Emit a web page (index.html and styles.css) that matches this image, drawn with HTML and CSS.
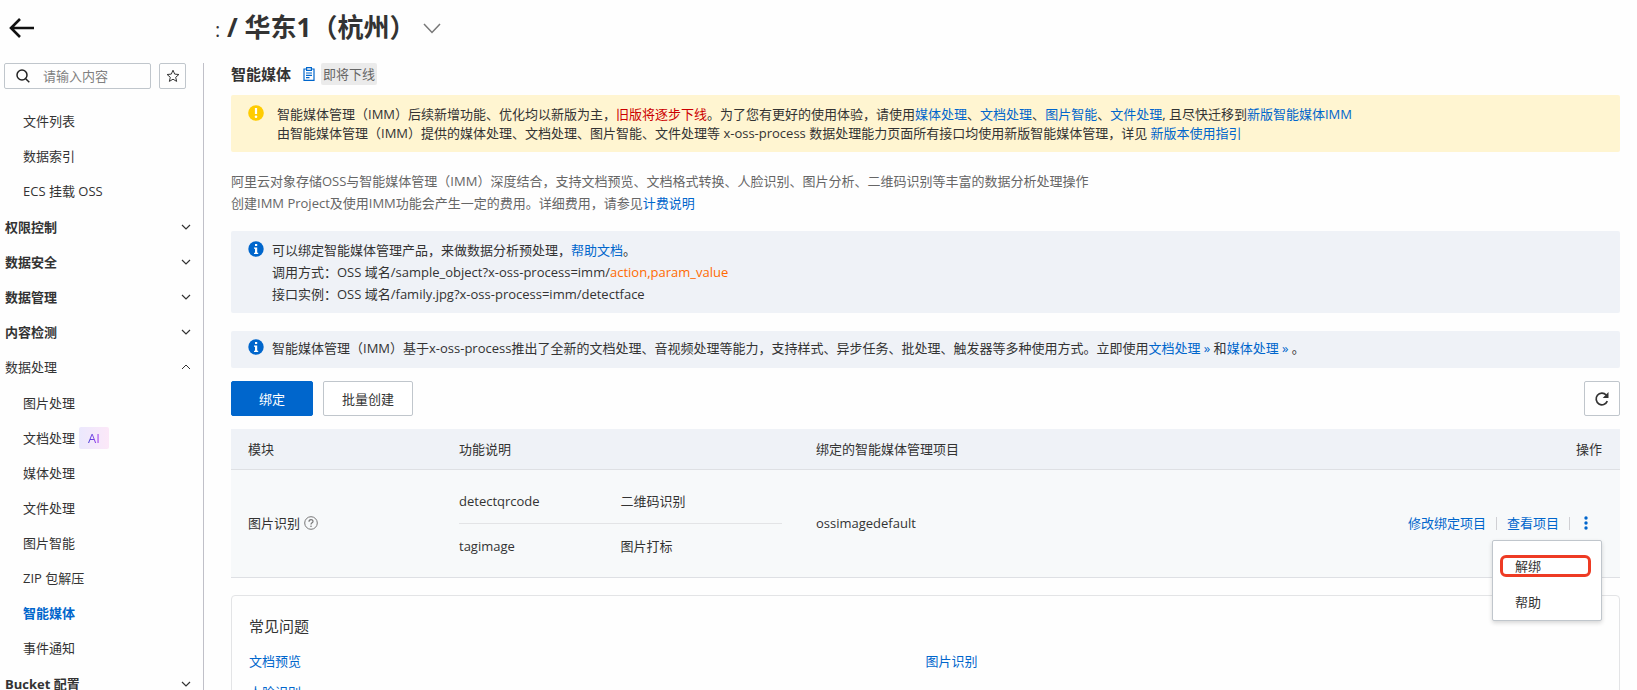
FILE: index.html
```html
<!DOCTYPE html>
<html lang="zh-CN">
<head>
<meta charset="utf-8">
<title>智能媒体</title>
<link rel="stylesheet" href="styles.css">
</head>
<body>
<svg class="defs" aria-hidden="true">
  <symbol id="down" viewBox="0 0 10 6"><path d="M1 1l4 4 4-4" fill="none" stroke="currentColor" stroke-width="1.2"/></symbol>
  <symbol id="up" viewBox="0 0 10 6"><path d="M1 5l4-4 4 4" fill="none" stroke="currentColor" stroke-width="1"/></symbol>
  <symbol id="info" viewBox="0 0 16 16"><circle cx="8" cy="8" r="7.7" fill="#06c"/><rect x="7" y="3" width="2.2" height="2" fill="#fff"/><path d="M6 6.5h3.2v5.2h1V13H6v-1.300h1V7.800H6z" fill="#fff"/></symbol>
</svg>
<header class="topbar">
  <button class="back" type="button" aria-label="返回"><svg width="26" height="20" viewBox="0 0 26 20"><path d="M11 1L2 10l9 9M2 10h23" fill="none" stroke="#111" stroke-width="2.600"/></svg></button>
  <h1 class="region"><span class="region-sep">:</span> / 华东1（杭州）</h1>
  <button class="region-toggle" type="button" aria-label="切换地域"><svg width="18" height="11" viewBox="0 0 18 11"><path d="M1 1l8 8.500L17 1" fill="none" stroke="#777" stroke-width="1.500"/></svg></button>
</header>
<div class="layout">
  <aside class="sidebar">
    <div class="tools">
      <label class="search">
        <svg width="14" height="14" viewBox="0 0 14 14"><circle cx="6" cy="6" r="5" fill="none" stroke="#222" stroke-width="1.500"/><path d="M9.700 9.700l3.600 3.600" stroke="#222" stroke-width="1.500"/></svg>
        <input type="text" placeholder="请输入内容" aria-label="请输入内容">
      </label>
      <button class="star" type="button" aria-label="收藏"><svg width="14" height="14" viewBox="0 0 14 14"><path d="M7 1.200l1.700 3.900 4.200.4-3.200 2.800.95 4.100L7 10.200l-3.650 2.200.95-4.100L1.100 5.500l4.200-.4z" fill="none" stroke="#333" stroke-width="1"/></svg></button>
    </div>
    <nav class="nav">
      <div class="items">
        <a href="#">文件列表</a>
        <a href="#">数据索引</a>
        <a href="#">ECS 挂载 OSS</a>
      </div>
      <button class="group" type="button">权限控制<svg width="10" height="6"><use href="#down"/></svg></button>
      <button class="group" type="button">数据安全<svg width="10" height="6"><use href="#down"/></svg></button>
      <button class="group" type="button">数据管理<svg width="10" height="6"><use href="#down"/></svg></button>
      <button class="group" type="button">内容检测<svg width="10" height="6"><use href="#down"/></svg></button>
      <button class="group open" type="button">数据处理<svg width="10" height="6"><use href="#up"/></svg></button>
      <div class="items">
        <a href="#">图片处理</a>
        <a href="#">文档处理<span class="ai"><span>AI</span></span></a>
        <a href="#">媒体处理</a>
        <a href="#">文件处理</a>
        <a href="#">图片智能</a>
        <a href="#">ZIP 包解压</a>
        <a href="#" class="active">智能媒体</a>
        <a href="#">事件通知</a>
      </div>
      <button class="group" type="button">Bucket 配置<svg width="10" height="6"><use href="#down"/></svg></button>
    </nav>
  </aside>
  <main class="content">
    <div class="heading">
      <h2>智能媒体</h2>
      <svg width="12" height="14" viewBox="0 0 12 14"><g fill="none" stroke="#06c" stroke-width="1.200"><path d="M3.500 2H1v11.300h10V2H8.500"/><path d="M3.600.7h4.800v2.600H3.600zM3 6h6M3 8.300h6M3 10.600h3.500"/></g></svg>
      <span class="tag">即将下线</span>
    </div>
    <section class="notice warning">
      <svg width="16" height="16" viewBox="0 0 16 16"><circle cx="8" cy="8" r="7.800" fill="#fc0"/><path d="M8 3v6" stroke="#fff" stroke-width="2.200"/><circle cx="8" cy="11.800" r="1.300" fill="#fff"/></svg>
      <div>
        <p>智能媒体管理（IMM）后续新增功能、优化均以新版为主，<span class="danger">旧版将逐步下线</span>。为了您有更好的使用体验，请使用<a href="#">媒体处理</a>、<a href="#">文档处理</a>、<a href="#">图片智能</a>、<a href="#">文件处理</a>, 且尽快迁移到<a href="#">新版智能媒体IMM</a></p>
        <p>由智能媒体管理（IMM）提供的媒体处理、文档处理、图片智能、文件处理等 x-oss-process 数据处理能力页面所有接口均使用新版智能媒体管理，详见 <a href="#">新版本使用指引</a></p>
      </div>
    </section>
    <div class="intro">
      <p>阿里云对象存储OSS与智能媒体管理（IMM）深度结合，支持文档预览、文档格式转换、人脸识别、图片分析、二维码识别等丰富的数据分析处理操作</p>
      <p>创建IMM Project及使用IMM功能会产生一定的费用。详细费用，请参见<a href="#">计费说明</a></p>
    </div>
    <section class="notice info">
      <svg width="16" height="16"><use href="#info"/></svg>
      <div>
        <p>可以绑定智能媒体管理产品，来做数据分析预处理，<a href="#">帮助文档</a>。</p>
        <p>调用方式：OSS 域名/sample_object?x-oss-process=imm/<span class="param">action,param_value</span></p>
        <p>接口实例：OSS 域名/family.jpg?x-oss-process=imm/detectface</p>
      </div>
    </section>
    <section class="notice info single">
      <svg width="16" height="16"><use href="#info"/></svg>
      <p>智能媒体管理（IMM）基于x-oss-process推出了全新的文档处理、音视频处理等能力，支持样式、异步任务、批处理、触发器等多种使用方式。立即使用<a href="#">文档处理 »</a> 和<a href="#">媒体处理 »</a> 。</p>
    </section>
    <div class="actions">
      <button class="btn primary" type="button">绑定</button>
      <button class="btn" type="button">批量创建</button>
      <button class="btn refresh" type="button" aria-label="刷新"><svg width="16" height="16" viewBox="0 0 16 16"><path d="M13.300 10.200A5.800 5.800 0 1 1 12.200 4" fill="none" stroke="#333" stroke-width="1.700"/><path d="M14.500 1v6H8.700z" fill="#333"/></svg></button>
    </div>
    <table class="modules">
      <thead>
        <tr><th class="c-module">模块</th><th class="c-func">功能说明</th><th>绑定的智能媒体管理项目</th><th class="c-ops">操作</th></tr>
      </thead>
      <tbody>
        <tr>
          <td>图片识别<svg class="help" width="14" height="14" viewBox="0 0 14 14"><circle cx="7" cy="7" r="6.300" fill="none" stroke="#777"/><path d="M5 5.700C5 3 9 3 9 5.400 9 6.900 7 6.800 7 8.500" fill="none" stroke="#777" stroke-width="1.200"/><circle cx="7" cy="10.300" r=".8" fill="#777"/></svg></td>
          <td>
            <dl class="funcs">
              <div><dt>detectqrcode</dt><dd>二维码识别</dd></div>
              <div><dt>tagimage</dt><dd>图片打标</dd></div>
            </dl>
          </td>
          <td>ossimagedefault</td>
          <td class="c-ops">
            <div class="ops">
              <a href="#">修改绑定项目</a>
              <a href="#">查看项目</a>
              <button class="more" type="button" aria-label="更多"><svg width="4" height="14" viewBox="0 0 4 14" fill="#06c"><circle cx="2" cy="2" r="1.700"/><circle cx="2" cy="7" r="1.700"/><circle cx="2" cy="12" r="1.700"/></svg></button>
              <div class="menu">
                <button class="marked" type="button">解绑</button>
                <button type="button">帮助</button>
              </div>
            </div>
          </td>
        </tr>
      </tbody>
    </table>
    <section class="faq">
      <h3>常见问题</h3>
      <div class="faq-links">
        <a href="#">文档预览</a><a href="#">图片识别</a>
        <a href="#">人脸识别</a>
      </div>
    </section>
  </main>
</div>
</body>
</html>
```
FILE: styles.css
```css
* { box-sizing: border-box; }
body {
  margin: 0;
  height: 100vh;
  display: flex;
  flex-direction: column;
  overflow: hidden;
  background: #fefefe;
  color: #333;
  font: 13px/22px "Open Sans", "Noto Sans CJK SC", sans-serif;
}
h1, h2, h3, p, dl, dd { margin: 0; }
a { color: #06c; text-decoration: none; }
button, input { font: inherit; color: inherit; }
button { padding: 0; border: 0; background: none; cursor: pointer; }
svg { display: block; flex: none; }
.defs { position: absolute; width: 0; height: 0; }

.topbar { display: flex; align-items: center; height: 56px; padding-left: 9px; flex: none; }
.back { width: 206px; }
.region { font-size: 26px; line-height: 36px; white-space: nowrap; }
.region-sep { font-size: 20px; font-weight: 400; }
.region-toggle { margin-left: 8px; }

.layout { display: flex; flex: 1; min-height: 0; padding-top: 7px; }
.sidebar { width: 204px; flex: none; border-right: 1px solid #c0c0c8; overflow: hidden; }
.tools { display: flex; gap: 8px; padding-left: 4px; }
.search, .star { height: 26px; border: 1px solid #c0c6cc; border-radius: 2px; }
.search { display: flex; align-items: center; gap: 13px; width: 147px; padding-left: 11px; }
.search input { width: 100px; padding: 0; border: 0; outline: 0; background: none; }
.search input::placeholder { color: #808080; opacity: 1; }
.star { display: grid; place-items: center; width: 27px; }
.nav { padding-top: 14px; }
.items { padding-bottom: 1px; }
.items a { display: flex; align-items: center; gap: 4px; height: 35px; padding-left: 23px; color: #333; }
.items .active { color: #06c; font-weight: 700; }
.group {
  display: flex;
  align-items: center;
  justify-content: space-between;
  width: 100%;
  height: 35px;
  padding: 0 12px 0 5px;
  font-weight: 700;
}
.group.open { height: 36px; font-weight: 400; }
.ai { width: 30px; border-radius: 2px; background: linear-gradient(90deg, #ebe8fd, #fce8f8); text-align: center; font-weight: 500; }
.ai span { background: linear-gradient(90deg, #4a40d8, #b040f0); background-clip: text; color: transparent; }

.content { flex: 1; min-width: 0; padding: 0 17px 0 27px; overflow: hidden; }
.heading { display: flex; align-items: center; height: 22px; }
.heading h2 { font-size: 15px; margin-right: 12px; }
.tag { margin-left: 6px; padding: 0 2px; border-radius: 2px; background: #ebebeb; color: #666; }
.notice { display: flex; border-radius: 2px; }
.warning { gap: 13px; margin-top: 10px; padding: 10px 17px 9px; background: #fff5d1; line-height: 19px; }
.danger { color: #c00; }
.intro { margin: 18px 0 17px; color: #666; }
.info { gap: 8px; padding: 8px 17px; background: #eff2f7; }
.info svg { margin-top: 2px; }
.single { margin-top: 18px; padding: 6px 17px 9px; }
.param { color: #ff6a00; }
.actions { display: flex; gap: 10px; margin: 13px 0; }
.btn { height: 35px; padding: 0 18px; border: 1px solid #c0c6cc; border-radius: 2px; background: #fff; }
.primary { padding: 0 27px; border-color: #06c; background: #06c; color: #fff; }
.refresh { display: grid; place-items: center; width: 36px; margin-left: auto; padding: 0; }

.modules { width: 100%; border-collapse: collapse; table-layout: fixed; }
.modules th, .modules td { padding: 0 17px; border-bottom: 1px solid #dee0e4; text-align: left; font-weight: 400; }
.modules th { height: 40px; background: #eff2f7; }
.modules td { height: 108px; background: #f7f9fa; }
.modules .c-module { width: 211px; }
.modules .c-func { width: 357px; }
.modules .c-ops { padding-right: 18px; text-align: right; }
.help { display: inline-block; margin-left: 4px; vertical-align: -2px; }
.funcs div { display: grid; grid-template-columns: 1fr 1fr; padding: 11px 0; }
.funcs div + div { border-top: 1px solid #e3e4e6; }
.ops { position: relative; display: flex; align-items: center; justify-content: flex-end; }
.ops a::after { content: ""; display: inline-block; width: 1px; height: 13px; margin: 0 10px; background: #d0d0d4; vertical-align: -2px; }
.more { padding: 4px 14px 4px 4px; }
.menu {
  position: absolute;
  top: 28px;
  right: 0;
  z-index: 1;
  display: grid;
  gap: 14px;
  width: 110px;
  padding: 14px 10px 7px 7px;
  border: 1px solid #c0c6cc;
  border-radius: 2px;
  background: #fff;
  box-shadow: 0 2px 4px rgba(0, 0, 0, .16);
}
.menu button { height: 22px; padding-left: 12px; border: 3px solid transparent; border-radius: 6px; line-height: 14px; text-align: left; }
.menu .marked { border-color: #ee3b24; }

.faq { min-height: 140px; margin-top: 17px; padding: 19px 17px; border: 1px solid #e3e4e6; border-radius: 4px; }
.faq h3 { font-size: 15px; font-weight: 400; }
.faq-links { display: grid; grid-template-columns: 1fr 1fr; row-gap: 9px; margin-top: 13px; }
```
